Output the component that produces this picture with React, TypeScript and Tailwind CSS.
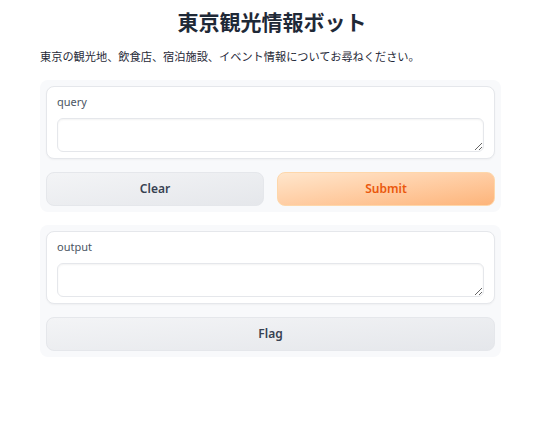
const font = { fontFamily: '"Noto Sans", "Noto Sans CJK JP", sans-serif' };

function Field({ label }: { label: string }) {
  return (
    <div className="flex h-[73px] flex-col rounded-lg border border-[#e5e7eb] bg-white px-[10px] pt-[8px] shadow-[0_1px_2px_rgba(0,0,0,0.04)]">
      <span className="text-[11px] leading-[14px] text-[#4b5563]">{label}</span>
      <textarea
        rows={1}
        className="mt-[9px] h-[34px] w-full rounded-md border border-[#e5e7eb] bg-white px-2 text-sm shadow-[inset_0_1px_2px_rgba(0,0,0,0.05)] outline-none"
      />
    </div>
  );
}

export default function App() {
  return (
    <div className="h-[448px] w-[544px] bg-white px-[40px] pt-[10px] text-[#1f2937]" style={font}>
      <h1 className="text-center text-[21px] font-bold leading-[24px] text-[#1f2937]">東京観光情報ボット</h1>
      <p className="mt-[15px] text-[11.2px] leading-[16px] text-[#1f2937]">
        東京の観光地、飲食店、宿泊施設、イベント情報についてお尋ねください。
      </p>

      <div className="mt-[15px] flex w-[461px] flex-col gap-[13px] rounded-lg bg-[#f8f9fb] p-[6px]">
        <Field label="query" />
        <div className="flex gap-[13px]">
          <button className="h-[34px] flex-1 rounded-lg border border-[#e5e7eb] bg-gradient-to-br from-[#f3f4f6] to-[#e5e7eb] text-[12px] font-semibold text-[#374151]">
            Clear
          </button>
          <button className="h-[34px] flex-1 rounded-lg border border-[#fed7aa] bg-gradient-to-br from-[#ffe6cc] to-[#fdb47a] text-[12px] font-semibold text-[#ea580c]">
            Submit
          </button>
        </div>
      </div>

      <div className="mt-[13px] flex w-[461px] flex-col gap-[13px] rounded-lg bg-[#f8f9fb] p-[6px]">
        <Field label="output" />
        <button className="h-[34px] w-full rounded-lg border border-[#e5e7eb] bg-gradient-to-br from-[#f3f4f6] to-[#e5e7eb] text-[12px] font-semibold text-[#374151]">
          Flag
        </button>
      </div>
    </div>
  );
}
